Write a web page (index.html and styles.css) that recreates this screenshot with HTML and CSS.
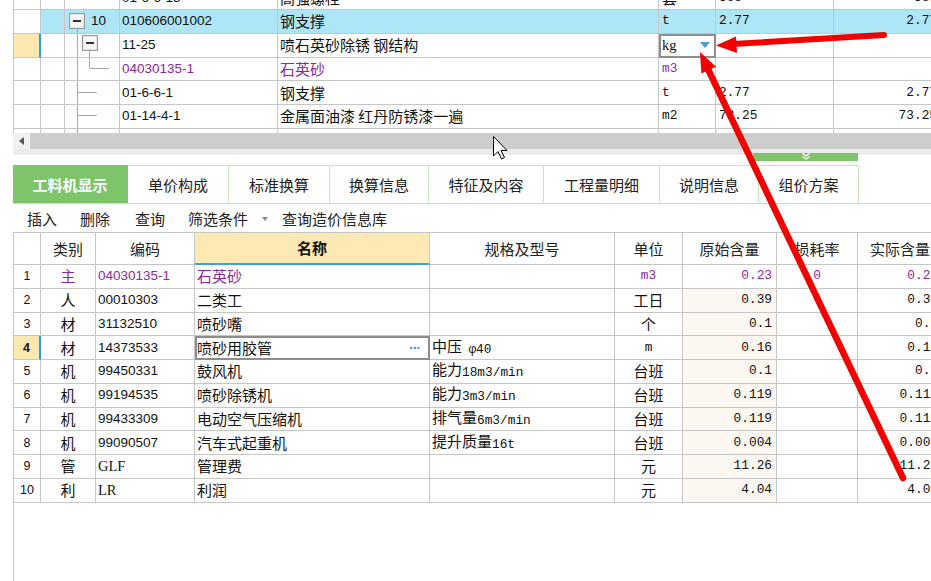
FILE: index.html
```html
<!DOCTYPE html>
<html lang="zh-CN">
<head>
<meta charset="utf-8">
<title>工料机显示</title>
<link rel="stylesheet" href="styles.css">
</head>
<body>
<div class="app">
  <div class="top-pane">
    <div class="tg">
      <div class="row">
        <div class="c"></div><div class="c"></div><div class="c tree"></div>
        <div class="c code">01-6-6-13</div><div class="c">高强螺栓</div><div class="c">套</div>
        <div class="c m">388</div><div class="c m r">388</div>
      </div>
      <div class="row">
        <div class="c"></div><div class="c hl"></div>
        <div class="c hl tree"><svg class="tr" width="24" height="23" viewBox="0 0 24 23"><line x1="12.5" y1="19" x2="12.5" y2="24" stroke="#a9a9a9"/><rect x="4.5" y="3.5" width="15" height="15" fill="#e4e4e4" stroke="#9a9a9a"/><rect x="6" y="5" width="12" height="12" fill="#f8f8f8"/><line x1="8" y1="11" x2="16" y2="11" stroke="#333" stroke-width="2"/></svg><span class="code">10</span></div>
        <div class="c hl code">010606001002</div><div class="c hl">钢支撑</div><div class="c hl m">t</div>
        <div class="c hl m">2.77</div><div class="c hl m r">2.77</div>
      </div>
      <div class="row">
        <div class="c cur"></div><div class="c"></div>
        <div class="c tree"><svg class="tr" width="54" height="24" viewBox="0 0 54 24"><line x1="12.5" y1="0" x2="12.5" y2="24" stroke="#a9a9a9"/><line x1="24.5" y1="17" x2="24.5" y2="24" stroke="#a9a9a9"/><rect x="17.5" y="2.5" width="15" height="15" fill="#e4e4e4" stroke="#9a9a9a"/><rect x="19" y="4" width="12" height="12" fill="#f8f8f8"/><line x1="21" y1="10" x2="29" y2="10" stroke="#333" stroke-width="2"/></svg></div>
        <div class="c code">11-25</div><div class="c">喷石英砂除锈 钢结构</div>
        <div class="c edit"><span class="serif">kg</span><span class="dd"></span></div>
        <div class="c"></div><div class="c"></div>
      </div>
      <div class="row">
        <div class="c"></div><div class="c"></div>
        <div class="c tree"><svg class="tr" width="54" height="24" viewBox="0 0 54 24"><line x1="12.5" y1="0" x2="12.5" y2="24" stroke="#a9a9a9"/><path d="M24.5 0V11.5H44" fill="none" stroke="#a9a9a9"/></svg></div>
        <div class="c code pu">04030135-1</div><div class="c pu">石英砂</div><div class="c m pu">m3</div>
        <div class="c"></div><div class="c"></div>
      </div>
      <div class="row">
        <div class="c"></div><div class="c"></div>
        <div class="c tree"><svg class="tr" width="54" height="24" viewBox="0 0 54 24"><line x1="12.5" y1="0" x2="12.5" y2="24" stroke="#a9a9a9"/><path d="M12.5 11.5H32" fill="none" stroke="#a9a9a9"/></svg></div>
        <div class="c code">01-6-6-1</div><div class="c">钢支撑</div><div class="c m">t</div>
        <div class="c m">2.77</div><div class="c m r">2.77</div>
      </div>
      <div class="row">
        <div class="c"></div><div class="c"></div>
        <div class="c tree"><svg class="tr" width="54" height="24" viewBox="0 0 54 24"><line x1="12.5" y1="0" x2="12.5" y2="24" stroke="#a9a9a9"/><path d="M12.5 11.5H32" fill="none" stroke="#a9a9a9"/></svg></div>
        <div class="c code">01-14-4-1</div><div class="c">金属面油漆 红丹防锈漆一遍</div><div class="c m">m2</div>
        <div class="c m">73.25</div><div class="c m r">73.25</div>
      </div>
      <div class="row">
        <div class="c"></div><div class="c"></div>
        <div class="c tree"><svg class="tr" width="54" height="24" viewBox="0 0 54 24"><line x1="12.5" y1="0" x2="12.5" y2="24" stroke="#a9a9a9"/></svg></div>
        <div class="c"></div><div class="c"></div><div class="c"></div><div class="c"></div><div class="c"></div>
      </div>
    </div>
  </div>

  <div class="hscroll"><div class="sbtn"><span class="larr"></span></div><div class="track"></div></div>

  <div class="splitter"><div class="handle"><svg width="10" height="8" viewBox="0 0 10 8"><path d="M1.5 0.5L5 3L8.5 0.5M1.5 3.5L5 6L8.5 3.5" fill="none" stroke="#fff" stroke-width="1.2"/></svg></div></div>

  <div class="tabs">
    <div class="tab on t1">工料机显示</div>
    <div class="tab t2">单价构成</div>
    <div class="tab t3">标准换算</div>
    <div class="tab t4">换算信息</div>
    <div class="tab t5">特征及内容</div>
    <div class="tab t6">工程量明细</div>
    <div class="tab t7">说明信息</div>
    <div class="tab t8">组价方案</div>
  </div>

  <div class="toolbar">
    <span class="tb">插入</span>
    <span class="tb g2">删除</span>
    <span class="tb g3">查询</span>
    <span class="tb g4">筛选条件</span>
    <span class="tdd"></span>
    <span class="tb g5">查询造价信息库</span>
  </div>

  <div class="lower">
    <div class="lg">
      <div class="row hd">
        <div class="c"></div><div class="c">类别</div><div class="c">编码</div><div class="c hname">名称</div>
        <div class="c">规格及型号</div><div class="c">单位</div><div class="c">原始含量</div><div class="c">损耗率</div><div class="c">实际含量</div>
      </div>
      <div class="row pu">
        <div class="c no">1</div><div class="c ctr">主</div><div class="c code">04030135-1</div><div class="c">石英砂</div>
        <div class="c"></div><div class="c ctr m">m3</div><div class="c m r">0.23</div><div class="c m ctr">0</div><div class="c m r">0.23</div>
      </div>
      <div class="row">
        <div class="c no">2</div><div class="c ctr">人</div><div class="c code">00010303</div><div class="c">二类工</div>
        <div class="c"></div><div class="c ctr">工日</div><div class="c m r qt">0.39</div><div class="c"></div><div class="c m r">0.39</div>
      </div>
      <div class="row">
        <div class="c no">3</div><div class="c ctr">材</div><div class="c code">31132510</div><div class="c">喷砂嘴</div>
        <div class="c"></div><div class="c ctr">个</div><div class="c m r qt">0.1</div><div class="c"></div><div class="c m r">0.1</div>
      </div>
      <div class="row">
        <div class="c no cur b">4</div><div class="c ctr">材</div><div class="c code">14373533</div><div class="c edit"><span>喷砂用胶管</span><span class="dots">···</span></div>
        <div class="c"><span>中压 <span class="m phi">φ40</span></span></div><div class="c ctr m">m</div><div class="c m r qt">0.16</div><div class="c"></div><div class="c m r">0.16</div>
      </div>
      <div class="row">
        <div class="c no">5</div><div class="c ctr">机</div><div class="c code">99450331</div><div class="c">鼓风机</div>
        <div class="c"><span>能力<span class="m">18m3/min</span></span></div><div class="c ctr">台班</div><div class="c m r qt">0.1</div><div class="c"></div><div class="c m r">0.1</div>
      </div>
      <div class="row">
        <div class="c no">6</div><div class="c ctr">机</div><div class="c code">99194535</div><div class="c">喷砂除锈机</div>
        <div class="c"><span>能力<span class="m">3m3/min</span></span></div><div class="c ctr">台班</div><div class="c m r qt">0.119</div><div class="c"></div><div class="c m r">0.119</div>
      </div>
      <div class="row">
        <div class="c no">7</div><div class="c ctr">机</div><div class="c code">99433309</div><div class="c">电动空气压缩机</div>
        <div class="c"><span>排气量<span class="m">6m3/min</span></span></div><div class="c ctr">台班</div><div class="c m r qt">0.119</div><div class="c"></div><div class="c m r">0.119</div>
      </div>
      <div class="row">
        <div class="c no">8</div><div class="c ctr">机</div><div class="c code">99090507</div><div class="c">汽车式起重机</div>
        <div class="c"><span>提升质量<span class="m">16t</span></span></div><div class="c ctr">台班</div><div class="c m r qt">0.004</div><div class="c"></div><div class="c m r">0.004</div>
      </div>
      <div class="row">
        <div class="c no">9</div><div class="c ctr">管</div><div class="c serif">GLF</div><div class="c">管理费</div>
        <div class="c"></div><div class="c ctr">元</div><div class="c m r qt">11.26</div><div class="c"></div><div class="c m r">11.26</div>
      </div>
      <div class="row">
        <div class="c no">10</div><div class="c ctr">利</div><div class="c serif">LR</div><div class="c">利润</div>
        <div class="c"></div><div class="c ctr">元</div><div class="c m r qt">4.04</div><div class="c"></div><div class="c m r">4.04</div>
      </div>
    </div>
  </div>

  <svg class="annot" width="931" height="581" viewBox="0 0 931 581">
    <line x1="884" y1="35" x2="733" y2="44" stroke="#f20000" stroke-width="6" stroke-linecap="round"/>
    <polygon points="716,45.5 736,36.5 737,53" fill="#f20000"/>
    <line x1="903" y1="478" x2="707" y2="67" stroke="#f20000" stroke-width="6.5" stroke-linecap="round"/>
    <polygon points="700,52 716,66.7 701.4,73.5" fill="#f20000"/>
    <path d="M493.5 136.5V156L498 151.5L501.5 159L504.5 157.5L501 150.5H507Z" fill="#fff" stroke="#000" stroke-width="1" stroke-linejoin="miter"/>
  </svg>
</div>
</body>
</html>
```

FILE: styles.css
```css
* { box-sizing: border-box; margin: 0; padding: 0; }
html, body { background: #fff; }
body {
  font-family: "Noto Sans CJK SC", "Liberation Sans", sans-serif;
  font-size: 15px;
  color: #111;
}
.app {
  position: relative;
  width: 931px;
  height: 581px;
  overflow: hidden;
  display: flex;
  flex-direction: column;
  background: #fff;
}

/* grids */
.row { display: grid; height: 23.75px; }
.c {
  display: flex;
  align-items: center;
  min-width: 0;
  padding: 0 2px;
  border-right: 1px solid #c6c6c6;
  border-bottom: 1px solid #c6c6c6;
  white-space: nowrap;
  overflow: hidden;
  line-height: 16px;
}
.ctr { justify-content: center; }
.r { justify-content: flex-end; padding-right: 4px; }
.code { font-family: "Liberation Sans", sans-serif; font-size: 13.5px; }
.m { font-family: "Liberation Mono", monospace; font-size: 12.8px; }
.c span .m { vertical-align: -1px; }
.serif { font-family: "Liberation Serif", serif; font-size: 14.5px; }
.pu, .pu .c { color: #8e2a9b; }
.hl { background: #aee5f7; }
.cur { background: #fde8b2; border-right: 2px solid #2c9ed8; }
.edit { outline: 2px solid #8d8d8d; outline-offset: -2px; }

/* top grid */
.top-pane {
  flex: none;
  height: 133px;
  overflow: hidden;
  margin-left: 13px;
  border-left: 1px solid #c6c6c6;
}
.tg { margin-top: -13.75px; }
.tg .row { grid-template-columns: 27px 24px 55px 158px 381px 57px 118px 108px; }
.tg .c:nth-child(6), .tg .c:nth-child(7) { padding-left: 3px; }
.tree { padding: 0; }
.tr { display: block; flex: none; }
.tree .code { margin-left: 2px; }
.dd {
  margin-left: auto;
  margin-right: 3px;
  width: 0;
  height: 0;
  border-left: 5px solid transparent;
  border-right: 5px solid transparent;
  border-top: 6px solid #4a9ad6;
}

/* scrollbar & splitter */
.hscroll {
  flex: none;
  height: 16px;
  margin-left: 13px;
  display: flex;
  background: #cdcdcd;
}
.sbtn {
  width: 17px;
  background: #f1f1f1;
  display: flex;
  align-items: center;
  justify-content: center;
}
.larr {
  width: 0; height: 0;
  border-top: 4px solid transparent;
  border-bottom: 4px solid transparent;
  border-right: 5px solid #555;
}
.track { flex: 1; }
.splitter {
  flex: none;
  height: 16px;
  margin-left: 13px;
  background: linear-gradient(#ebebeb 0 6px, #fff 6px);
}
.handle {
  margin-left: 740px;
  margin-top: 4px;
  width: 105px;
  height: 8px;
  background: #7dc46b;
  display: flex;
  justify-content: center;
}

/* tabs */
.tabs {
  flex: none;
  height: 39px;
  margin-left: 13px;
  display: flex;
  border-bottom: 1px solid #c5e6bb;
}
.tab {
  height: 38px;
  display: flex;
  align-items: center;
  justify-content: center;
  border-top: 1px solid #c5e6bb;
  border-right: 1px solid #c5e6bb;
  color: #222;
}
.tab.on { background: #7dc46b; color: #fff; font-weight: bold; border-color: #7dc46b; }
.t1 { width: 115px; }
.t2 { width: 101px; }
.t3 { width: 101px; }
.t4 { width: 99px; }
.t5 { width: 115px; }
.t6 { width: 116px; }
.t7 { width: 99px; }
.t8 { width: 100px; }

/* toolbar */
.toolbar {
  flex: none;
  height: 28px;
  display: flex;
  align-items: center;
  padding-left: 27px;
  color: #222;
}
.g2 { margin-left: 23px; }
.g3 { margin-left: 25px; }
.g4 { margin-left: 23px; }
.g5 { margin-left: 14px; }
.tdd {
  margin-left: 14px;
  margin-top: 2px;
  width: 0; height: 0;
  border-left: 3px solid transparent;
  border-right: 3px solid transparent;
  border-top: 4px solid #888;
}

/* lower grid */
.lower {
  flex: 1;
  margin-left: 13px;
  border-left: 1px solid #c6c6c6;
  border-top: 1px solid #c6c6c6;
  overflow: hidden;
}
.lg .row { grid-template-columns: 27px 55px 99px 235px 185px 68px 94px 81px 85px; }
.lg .hd { height: 32px; }
.hd .c { justify-content: center; color: #222; }
.hd .hname { background: #fde9b3; border-bottom: 2px solid #3aa2dc; font-weight: bold; color: #111; }
.no, .pu .no { justify-content: center; font-family: "Liberation Sans", sans-serif; font-size: 12.5px; color: #111; }
.b { font-weight: bold; }
.lg .c:nth-child(4), .lg .c:nth-child(5) { padding-left: 2px; }
.qt { background: #fdf7f1; }
.dots {
  margin-left: auto;
  margin-right: 7px;
  color: #3a9ad9;
  font-family: "Liberation Sans", sans-serif;
  font-size: 14px;
  font-weight: bold;
  letter-spacing: -1px;
}
.phi { margin-left: 3px; }

/* annotation overlay */
.annot { position: absolute; left: 0; top: 0; pointer-events: none; }
```
